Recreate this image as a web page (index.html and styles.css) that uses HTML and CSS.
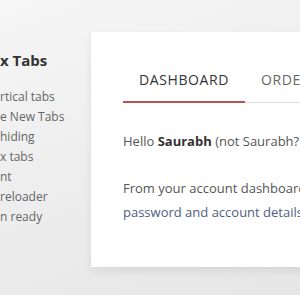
FILE: index.html
```html
<!DOCTYPE html>
<html>
<head>
<meta charset="utf-8">
<link rel="stylesheet" href="styles.css">
</head>
<body>
<div class="page">
  <aside class="side">
    <h2 class="side-title">x Tabs</h2>
    <ul class="side-list">
      <li>rtical tabs</li>
      <li>e New Tabs</li>
      <li>hiding</li>
      <li>x tabs</li>
      <li>nt</li>
      <li>reloader</li>
      <li>n ready</li>
    </ul>
  </aside>
  <main class="card">
    <nav class="tabs">
      <span class="tab active">DASHBOARD</span>
      <span class="tab">ORDERS</span>
    </nav>
    <div class="content">
      <p>Hello <strong>Saurabh</strong> (not Saurabh? Log out)</p>
      <p>From your account dashboard you can view your recent orders and edit your<br><span class="link">password and account details</span>.</p>
    </div>
  </main>
</div>
</body>
</html>
```
FILE: styles.css
```css
html, body {
  margin: 0;
  padding: 0;
}
body {
  width: 300px;
  height: 295px;
  overflow: hidden;
  background: linear-gradient(160deg, #f6f6f6 0%, #ececec 60%, #e6e6e6 100%);
  font-family: "Open Sans", "Liberation Sans", sans-serif;
}
.page {
  display: flex;
  align-items: flex-start;
}
.side {
  width: 91px;
  flex-shrink: 0;
  padding-top: 49px;
  overflow: hidden;
  white-space: nowrap;
}
.side-title {
  margin: 0 0 16px 0;
  font-size: 15px;
  line-height: 22px;
  font-weight: 700;
  color: #333;
}
.side-list {
  list-style: none;
  margin: 0;
  padding: 0;
  font-size: 12px;
  line-height: 20px;
  color: #666;
}
.card {
  flex-shrink: 0;
  width: 300px;
  height: 235px;
  margin-top: 32px;
  background: #fff;
  box-shadow: 0 4px 8px rgba(0, 0, 0, 0.08);
  padding: 26px 0 0 32px;
  box-sizing: border-box;
  overflow: hidden;
}
.tabs {
  display: flex;
  border-bottom: 1px solid #dedede;
  white-space: nowrap;
}
.tab {
  padding: 12px 16px 11px;
  font-size: 14px;
  line-height: 20px;
  letter-spacing: 0.6px;
  color: #666;
  margin-bottom: -1px;
  border-bottom: 2px solid transparent;
}
.tab.active {
  color: #333;
  border-bottom-color: #c0504d;
}
.content {
  margin-top: 26px;
  font-size: 13px;
  line-height: 24px;
  color: #555;
}
.content p {
  margin: 0 0 23px 0;
  white-space: nowrap;
}
.content strong {
  color: #333;
  font-weight: 700;
}
.link {
  color: #4f5e80;
}
```
